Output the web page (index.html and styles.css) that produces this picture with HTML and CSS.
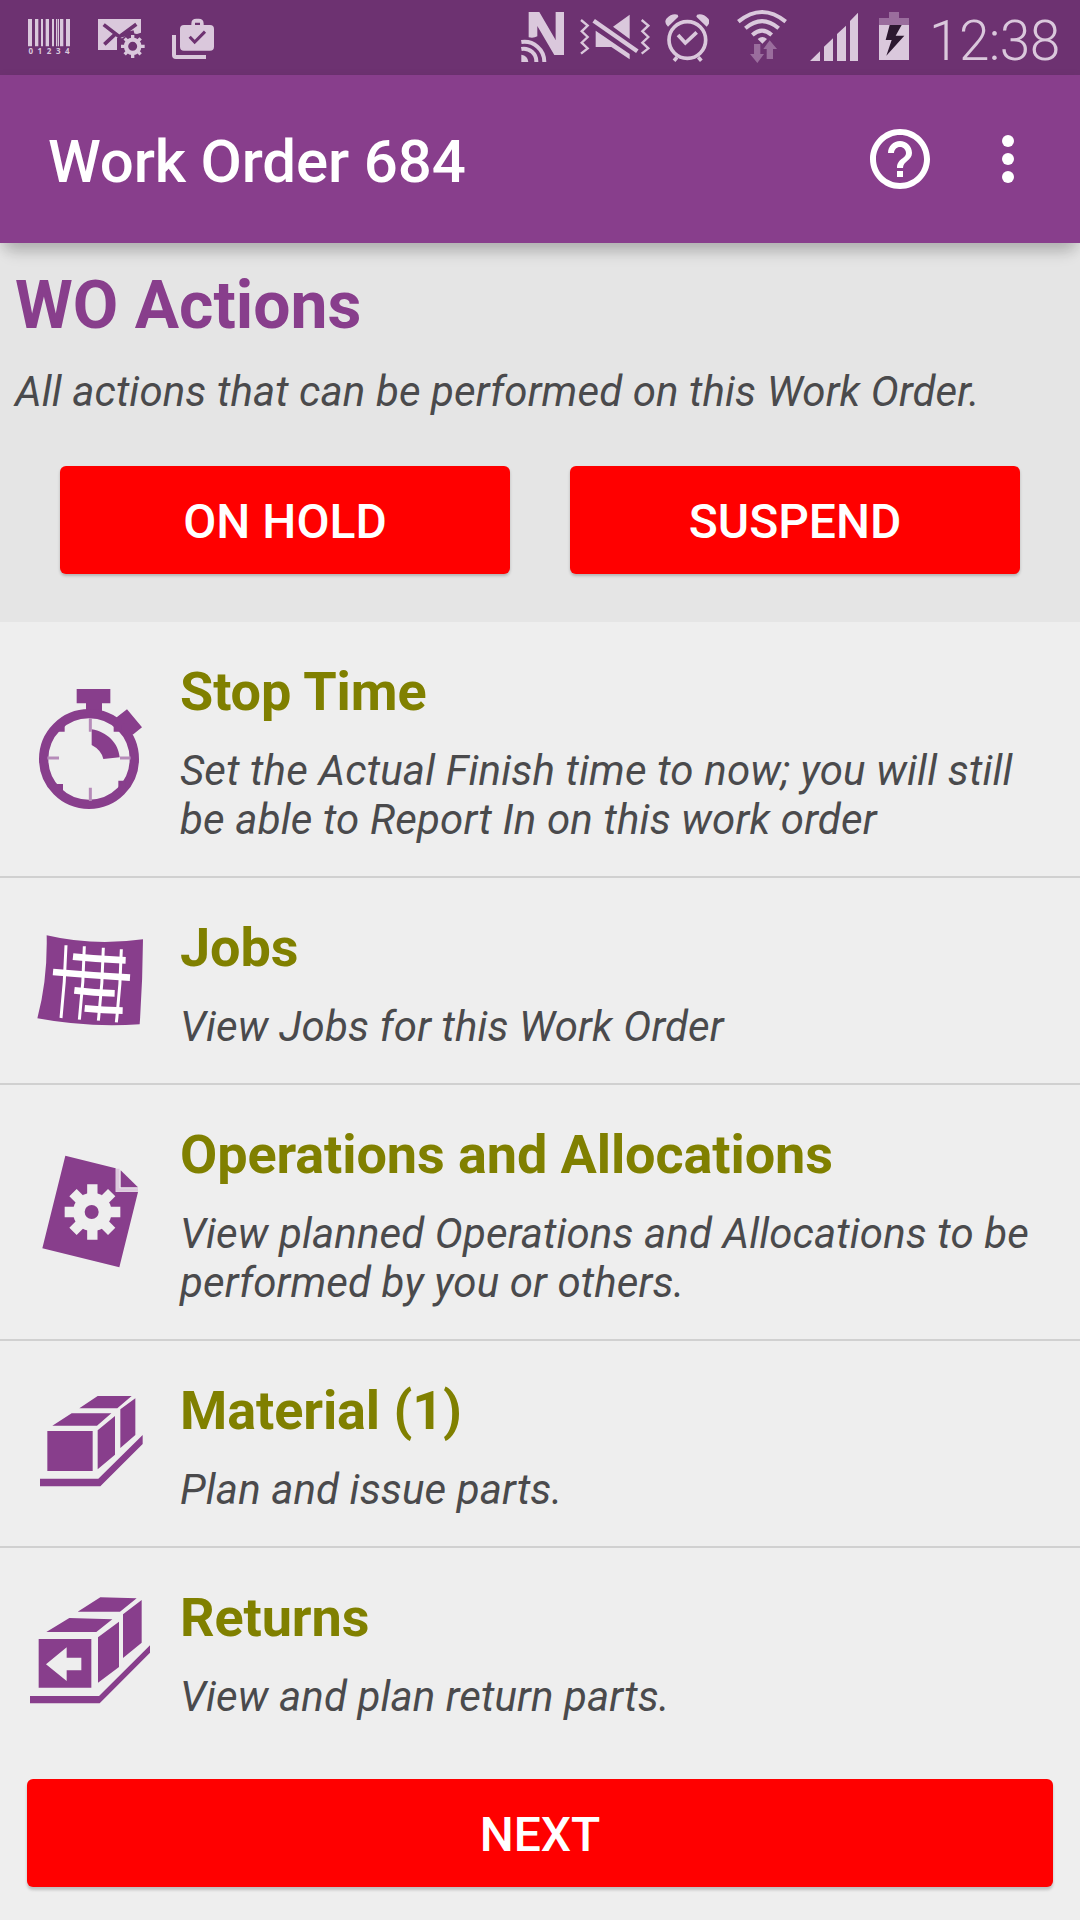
FILE: index.html
```html
<!DOCTYPE html>
<html lang="en">
<head>
<meta charset="utf-8">
<title>Work Order 684</title>
<link rel="stylesheet" href="styles.css">
</head>
<body>
<div class="screen">
  <div class="status-bar">
    <div class="status-left">
      <svg class="st-barcode" viewBox="84 0 126 225">
        <path d="M84 57h12v82H84zM105 57h10v82h-10zM123 57h6v82h-6zM137 57h10v82h-10zM156 57h6v82h-6zM168 57h4v82h-4zM174 57h3v82h-3zM180 57h10v82h-10zM198 57h12v82h-12z"/>
        <g class="digits"><text x="92" y="161">0</text><text x="119" y="161">1</text><text x="147" y="161">2</text><text x="175" y="161">3</text><text x="202" y="161">4</text></g>
      </svg>
      <svg class="st-mail" viewBox="294 0 141 225">
        <path d="M294 57h129v41l-12 4-14-2-20 7-10 8-16-2v37h-57z"/>
        <path class="cut" d="M311 74l47 36 51-37M313 133l32-30M360 108l42-12"/>
        <circle class="ring" cx="398" cy="139" r="20"/>
        <path class="teeth" d="M398 105v12M398 161v13M363 139h13M420 139h14M374 115l8 8M414 155l8 8M422 115l-8 8M382 155l-8 8"/>
      </svg>
      <svg class="st-bag" viewBox="516 0 126 225">
        <path fill-rule="evenodd" d="M552 75h22v-4q0-15 15-15h7q15 0 15 15v4h19q12 0 12 12v53q0 12-12 12h-78q-12 0-12-12V87q0-12 12-12zM585 75h15v-7h-15zM516 105h12v60h90v12h-90q-12 0-12-12z"/>
        <path class="cut thin" d="M569 110l15 16 31-31"/>
      </svg>
    </div>
    <div class="status-right">
      <svg class="st-nfc" viewBox="62 0 130 225">
        <path d="M85 36h32l49 84V36h26v129h-30L111 78v31q-10 6-26 3z"/>
        <path class="arc" d="M63 126a60 60 0 0 1 69 60M63 147a38 38 0 0 1 45 39"/>
        <path d="M63 164q19 2 21 22H63z"/>
      </svg>
      <svg class="st-mute" viewBox="241 0 209 225">
        <path d="M340 80l50-36v73zM288 92l102 70v16l-55-37h-47z"/>
        <path class="slash" d="M282 62l131 92"/>
        <path class="zig" d="M244 60l20 17-18 17 18 17-18 17 18 17-20 16M426 60l20 17-18 17 18 17-18 17 18 17-20 16"/>
      </svg>
      <svg class="st-alarm" viewBox="494 0 134 225">
        <circle class="ring10" cx="561" cy="120" r="55"/>
        <path class="line10" d="M533 105l22 24 34-32M530 172l-9 10M594 172l9 10"/>
        <path d="M503 80q-13-12-5-24 16-17 34-12l2 6zM619 80q13-12 5-24-16-17-34-12l-2 6z"/>
      </svg>
      <svg class="st-wifi" viewBox="711 0 149 225">
        <path class="arc" d="M715 65q71-58 142 0M736 85q50-43 100 0M757 105q29-26 58 0"/>
        <path d="M773 117q14-12 28 0l-14 14z"/>
        <path class="dim" d="M762 132h19v30h11l-20 27-22-27h12zM800 177v-30h-10l19-26 22 26h-12v30z"/>
      </svg>
      <svg class="st-signal" viewBox="90 0 144 225">
        <path d="M90 183l30-29v29zM132 183v-43l27-25v68zM171 183v-81l27-25v106zM210 183V63l24-25v145z"/>
      </svg>
      <svg class="st-battery" viewBox="297 0 90 225">
        <path class="dim" d="M297 54h30V36h30v18h30v21h-90z"/>
        <path d="M297 75h90v105h-90z"/>
        <path class="bolt" d="M329 75h36l-18 32h26l-54 60 16-47h-18z"/>
      </svg>
      <span class="clock">12:38</span>
    </div>
  </div>

  <header class="toolbar">
    <h1>Work Order 684</h1>
    <svg class="help" viewBox="2 2 20 20"><path d="M11 18h2v-2h-2v2zm1-16C6.48 2 2 6.48 2 12s4.480 10 10 10 10-4.480 10-10S17.520 2 12 2zm0 18c-4.410 0-8-3.590-8-8s3.590-8 8-8 8 3.590 8 8-3.590 8-8 8zm0-14c-2.210 0-4 1.790-4 4h2c0-1.100.9-2 2-2s2 .9 2 2c0 2-3 1.750-3 5h2c0-2.250 3-2.500 3-5 0-2.210-1.790-4-4-4z"/></svg>
    <svg class="more" viewBox="0 0 12 48"><circle cx="6" cy="6" r="6"/><circle cx="6" cy="24" r="6"/><circle cx="6" cy="42" r="6"/></svg>
  </header>

  <section class="intro">
    <h2>WO Actions</h2>
    <p class="desc">All actions that can be performed on this Work Order.</p>
    <div class="buttons">
      <button class="btn">ON HOLD</button>
      <button class="btn">SUSPEND</button>
    </div>
  </section>

  <main class="list">
    <div class="row">
      <svg class="icon" viewBox="30 57 360 360">
        <path d="M170 57h101v43h-25v25h-48v-25h-28zM321 118l45 54-26 21-20 8-43-50 14-10z"/>
        <ellipse class="rim" cx="207" cy="267" rx="136" ry="136"/>
        <path d="M215 178c46 8 80 40 84 84l-49 5q-6-27-35-42z"/>
        <path d="M110 165h24v20h-24zM281 165h24v20h-24zM105 342h24v22h-24zM295 332h22v22h-22z"/>
        <path class="tick" d="M211 145v40M211 353v40M82 264h35M300 264h32"/>
      </svg>
      <div class="text"><h3>Stop Time</h3><p class="desc">Set the Actual Finish time to now; you will still be able to Report In on this work order</p></div>
    </div>
    <div class="row">
      <svg class="icon" viewBox="30 32 360 360">
        <path d="M80 75q140 33 289 12-1 130-10 255-160 10-307-18 31-116 28-249z"/>
        <path class="grid-v" d="M138 105q-3 110-15 218M193 108q-2 110-15 220M250 112q-2 110-15 219M304 117q-2 110-15 219"/>
        <path class="grid-h" d="M159 139q75 8 158 11M99 185q115 10 231 17M163 240q60 7 121 9M194 294q55 5 114 7"/>
      </svg>
      <div class="text"><h3>Jobs</h3><p class="desc">View Jobs for this Work Order</p></div>
    </div>
    <div class="row">
      <svg class="icon" viewBox="30 66 360 360">
        <path d="M136 77l151 38v71h67l-56 226-231-57z"/>
        <path d="M302 121l52 51h-52z"/>
        <path class="fold" d="M293 116v64h61"/>
        <g class="gear"><circle cx="217" cy="246" r="58"/><path d="M217 163v166M134 246h167M159 188l116 116M275 188L159 304"/></g>
        <circle cx="215" cy="246" r="21"/>
      </svg>
      <div class="text"><h3>Operations and Allocations</h3><p class="desc">View planned Operations and Allocations to be performed by you or others.</p></div>
    </div>
    <div class="row">
      <svg class="icon" viewBox="30 40 360 360">
        <path d="M82 181h136v120H82zM97 165l58-37h119l-43 37zM233 179l52-43v116l-52 44zM178 113l55-37h102l-43 37zM301 116l45-33v110l-45 39zM60 324h175L368 193v27L241 347H60z"/>
      </svg>
      <div class="text"><h3>Material (1)</h3><p class="desc">Plan and issue parts.</p></div>
    </div>
    <div class="row">
      <svg class="icon" viewBox="30 62 360 360">
        <path fill-rule="evenodd" d="M56 206h158v146H56zM78 282l62 50v-32h44v-38h-44v-31z"/>
        <path d="M79 185l69-42 129 4-48 38zM234 201l63-47v136l-63 47zM173 124l68-43 109 3-50 40zM309 132l56-43v128l-56 46zM30 377h207L390 225v22L239 399H30z"/>
      </svg>
      <div class="text"><h3>Returns</h3><p class="desc">View and plan return parts.</p></div>
    </div>
  </main>

  <footer class="footer"><button class="btn">NEXT</button></footer>
</div>
</body>
</html>
```
FILE: styles.css
```css
* { box-sizing: border-box; }
body { margin: 0; font-family: Roboto, sans-serif; background: #eee; }
h1, h2, h3, p { margin: 0; }
svg { display: block; flex: none; }

.screen { width: 1080px; height: 1920px; display: flex; flex-direction: column; overflow: hidden; }

.status-bar { height: 75px; flex: none; display: flex; justify-content: space-between; background: #6d3271; padding: 0 22px 0 28px; }
.status-bar svg { height: 75px; fill: #dac8dc; }
.status-left, .status-right { display: flex; }
.status-left { gap: 28px; }
.st-barcode { width: 42px; }
.st-mail { width: 47px; }
.st-bag { width: 42px; margin-left: -1px; }
.st-nfc { width: 43.300px; margin-right: 16.400px; }
.st-mute { width: 69.700px; margin-right: 14.600px; }
.st-alarm { width: 44.700px; margin-right: 27.600px; }
.st-wifi { width: 49.700px; margin-right: 23.300px; }
.st-signal { width: 48px; margin-right: 21px; }
.st-battery { width: 30px; margin-right: 20px; }
.clock { width: 129px; font-size: 55px; font-weight: 350; line-height: 75px; letter-spacing: -.6px; padding-top: 4px; color: #dac8dc; white-space: nowrap; }

.digits { font: bold 24px "Open Sans", sans-serif; text-anchor: middle; }
.cut { fill: none; stroke: #6d3271; stroke-width: 11; }
.thin { stroke-width: 9; }
.ring, .ring10, .teeth, .arc, .slash, .zig, .line10 { fill: none; stroke: #dac8dc; }
.ring { stroke-width: 13; }
.ring10, .line10 { stroke-width: 11; }
.teeth { stroke-width: 10; }
.arc { stroke-width: 12; }
.slash { stroke-width: 13; }
.zig { stroke-width: 7; }
.status-bar .dim { fill: #9a6d9d; }
.status-bar .bolt { fill: #2c1830; }

.toolbar { height: 168px; flex: none; position: relative; display: flex; align-items: center; padding: 0 66px 0 48px; background: #883e8c; box-shadow: 0 18px 14px -8px rgba(0, 0, 0, .14), 0 5px 12px rgba(0, 0, 0, .12); }
.toolbar h1 { flex: 1; padding-top: 5px; font-size: 60px; font-weight: 500; line-height: 70px; letter-spacing: -.15px; color: #fff; }
.toolbar svg { fill: #fff; }
.help { width: 60px; height: 60px; margin-right: 72px; }
.more { width: 12px; height: 48px; }

.intro { height: 379px; flex: none; background: #e5e5e5; padding: 24px 15px 0; }
.intro h2 { margin-bottom: 22px; font-size: 66px; font-weight: 700; line-height: 78px; color: #883e8c; }
.desc { font-size: 42px; font-style: italic; line-height: 49px; letter-spacing: .12px; color: #4a4a4c; }
.buttons { display: flex; gap: 60px; padding: 50px 45px 0; }
.btn { flex: 1; height: 108px; border: 0; border-radius: 6px; padding: 3px 0 0; background: #f00; color: #fff; font: 500 48px/56px Roboto, sans-serif; box-shadow: 0 2px 3px rgba(0, 0, 0, .22); }

.list { flex: 1; }
.row { display: flex; align-items: center; padding: 38px 30px 32px; border-bottom: 2px solid #d0d0d0; }
.row:last-child { border-bottom: 0; }
.icon { width: 120px; height: 120px; margin: -26px 30px -20px 0; fill: #883e8c; }
.text { flex: 1; }
.row h3 { margin-bottom: 22px; font-size: 54px; font-weight: 700; line-height: 64px; letter-spacing: -.1px; color: #808000; }
.rim { fill: none; stroke: #883e8c; stroke-width: 28; }
.tick { fill: none; stroke: #b68bb9; stroke-width: 9; }
.grid-v, .grid-h { fill: none; stroke: #fff; }
.grid-v { stroke-width: 9; }
.grid-h { stroke-width: 20; }
.fold { fill: none; stroke: #dcc8dd; stroke-width: 11; }
.gear { fill: #eee; stroke: #eee; stroke-width: 31; }
.gear circle { stroke: none; }
.row:first-child .desc { letter-spacing: .17px; }

.footer { flex: none; display: flex; padding: 0 27px 33px; }
.footer .btn { box-shadow: 0 3px 3px rgba(0, 0, 0, .2); }
```
